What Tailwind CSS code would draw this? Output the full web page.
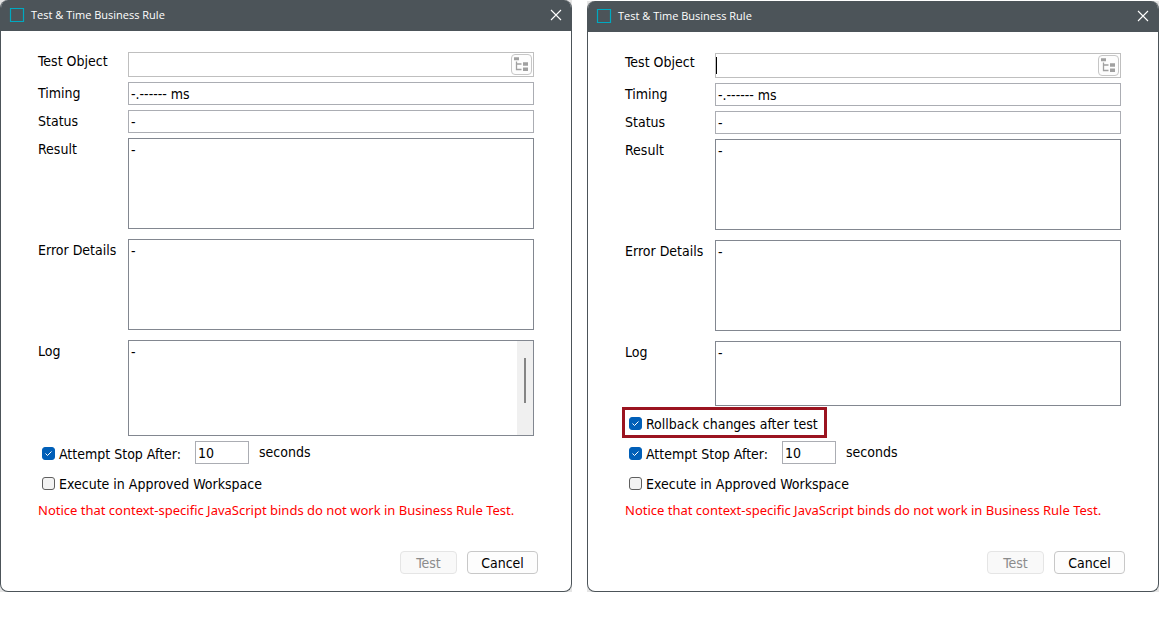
<!DOCTYPE html>
<html lang="en">
  <head>
    <meta charset="UTF-8" />
    <meta name="viewport" content="width=device-width, initial-scale=1.0" />
    <title>Test &amp; Time Business Rule</title>
    <script src="https://cdn.jsdelivr.net/npm/@tailwindcss/browser@4"></script>
    <style>
      body {
        font-family: 'DejaVu Sans Condensed', 'Noto Sans', sans-serif;
      }
    </style>
  </head>
  <body class="bg-white text-black text-sm leading-[18px]">
    <main class="grid grid-cols-2 gap-[15px]">
      <!-- Dialog without the rollback option -->
      <section class="bg-neutral-200">
        <div class="h-full flex flex-col bg-white border border-t-0 border-[#4c5459] rounded-lg overflow-hidden">
          <header class="h-[31px] bg-[#4c5459] text-white flex items-center pl-2 pr-[9px] pb-px">
            <svg class="w-4 h-4" viewBox="0 0 16 16" fill="none" stroke="#00a9c1" stroke-width="1.2"><path d="M1.500 1.500h13v13h-13z" /></svg>
            <h1 class="ml-[6px] text-[11px] font-['Open_Sans']">Test &amp; Time Business Rule</h1>
            <button type="button" aria-label="Close" class="ml-auto">
              <svg class="w-3 h-3" viewBox="0 0 12 12" fill="none" stroke="#fff" stroke-width="1.1"><path d="M1 1l10 10M11 1L1 11" /></svg>
            </button>
          </header>
          <form class="flex-1 flex flex-col px-[37px] pt-[21px] pb-[17px]">
            <div class="grid grid-cols-[90px_1fr] gap-y-[5px]">
              <label for="object1">Test Object</label>
              <div class="h-[25px] flex items-center border border-[#bfbfbf] pl-[2px] pr-px">
                <input id="object1" type="text" class="flex-1 min-w-0 outline-none" />
                <button type="button" aria-label="Browse" class="w-[21px] h-[21px] border border-[#c6c6c6] rounded bg-[#fdfdfd] flex items-center justify-center">
                  <svg class="w-[15px] h-[15px]" viewBox="0 0 15 15"><path fill="#a0a0a0" d="M0 0.300h5v3H0zM9 5.300h5v3.400H9zM9 10.600h5v3.400H9z" /><path d="M2.500 4.500v8H7.500M2.500 7H7.500" fill="none" stroke="#a0a0a0" stroke-width="1.3" /></svg>
                </button>
              </div>
              <label for="timing1" class="pt-[2px]">Timing</label>
              <input id="timing1" type="text" readonly value="-.------ ms" class="h-[23px] border border-[#abadb3] px-[2px] outline-none" />
              <label for="status1" class="pt-[2px]">Status</label>
              <input id="status1" type="text" readonly value="-" class="h-[23px] border border-[#abadb3] px-[2px] outline-none" />
              <label for="result1" class="pt-[2px]">Result</label>
              <textarea id="result1" readonly class="h-[91px] mb-[5px] border border-[#828790] px-[2px] pt-[2px] resize-none outline-none">-</textarea>
              <label for="error1" class="pt-[2px]">Error Details</label>
              <textarea id="error1" readonly class="h-[91px] mb-[5px] border border-[#828790] px-[2px] pt-[2px] resize-none outline-none">-</textarea>
              <label for="log1" class="pt-[2px]">Log</label>
              <div class="h-[96px] flex border border-[#828790]">
                <textarea id="log1" readonly class="flex-1 min-w-0 px-[2px] pt-[2px] resize-none outline-none">-</textarea>
                <div class="w-4 bg-[#f0f0f0] flex justify-center pt-[17px]">
                  <div class="w-[2px] h-[45px] bg-[#858585]"></div>
                </div>
              </div>
            </div>
            <div class="mt-[5px] h-[23px] flex items-center pl-1">
              <div class="w-[153px] flex items-center pt-[2px]">
                <input id="stop1" type="checkbox" checked class="appearance-none w-[13px] h-[13px] rounded-[3px] border border-[#5f5f5f] bg-[#f3f3f3] checked:bg-[#005fb8] checked:border-[#005fb8]" />
                <svg class="w-[13px] h-[13px] -ml-[13px] pointer-events-none" viewBox="0 0 13 13" fill="none" stroke="#fff"><path d="M3.500 6.500l2 2 4-4" /></svg>
                <label for="stop1" class="pl-1">Attempt Stop After:</label>
              </div>
              <input id="seconds1" type="text" value="10" class="w-[54px] h-[23px] border border-[#abadb3] px-[2px] outline-none" />
              <label for="seconds1" class="ml-[10px] pb-[2px]">seconds</label>
            </div>
            <div class="mt-2 h-[23px] flex items-center pl-1">
              <input id="approved1" type="checkbox" class="appearance-none w-[13px] h-[13px] rounded-[3px] border border-[#5f5f5f] bg-[#f3f3f3]" />
              <label for="approved1" class="pl-1">Execute in Approved Workspace</label>
            </div>
            <p class="mt-[6px] text-[#ff0000] text-[13px] leading-[18px] font-['Noto_Sans']">Notice that context-specific JavaScript binds do not work in Business Rule Test.</p>
            <div class="mt-8 -mr-1 flex justify-end gap-[10px]">
              <button type="button" disabled class="w-[57px] h-[23px] border border-[#e5e5e5] rounded bg-[#f9f9f9] text-[#8b8b8b]">Test</button>
              <button type="button" class="w-[71px] h-[23px] border border-[#c8c8c8] rounded bg-[#fdfdfd]">Cancel</button>
            </div>
          </form>
        </div>
      </section>

      <!-- Dialog with the rollback option highlighted -->
      <section class="mt-px bg-neutral-200">
        <div class="h-full flex flex-col bg-white border border-t-0 border-[#4c5459] rounded-lg overflow-hidden">
          <header class="h-[31px] bg-[#4c5459] text-white flex items-center pl-2 pr-[9px] pb-px">
            <svg class="w-4 h-4" viewBox="0 0 16 16" fill="none" stroke="#00a9c1" stroke-width="1.2"><path d="M1.500 1.500h13v13h-13z" /></svg>
            <h1 class="ml-[6px] text-[11px] font-['Open_Sans']">Test &amp; Time Business Rule</h1>
            <button type="button" aria-label="Close" class="ml-auto">
              <svg class="w-3 h-3" viewBox="0 0 12 12" fill="none" stroke="#fff" stroke-width="1.1"><path d="M1 1l10 10M11 1L1 11" /></svg>
            </button>
          </header>
          <form class="flex-1 flex flex-col px-[37px] pt-[21px] pb-[17px]">
            <div class="grid grid-cols-[90px_1fr] gap-y-[5px]">
              <label for="object2">Test Object</label>
              <div class="h-[25px] flex items-center border border-[#bfbfbf] pr-px">
                <span class="w-px h-[17px] bg-black"></span>
                <input id="object2" type="text" class="flex-1 min-w-0 outline-none" />
                <button type="button" aria-label="Browse" class="w-[21px] h-[21px] border border-[#c6c6c6] rounded bg-[#fdfdfd] flex items-center justify-center">
                  <svg class="w-[15px] h-[15px]" viewBox="0 0 15 15"><path fill="#a0a0a0" d="M0 0.300h5v3H0zM9 5.300h5v3.400H9zM9 10.600h5v3.400H9z" /><path d="M2.500 4.500v8H7.500M2.500 7H7.500" fill="none" stroke="#a0a0a0" stroke-width="1.3" /></svg>
                </button>
              </div>
              <label for="timing2" class="pt-[2px]">Timing</label>
              <input id="timing2" type="text" readonly value="-.------ ms" class="h-[23px] border border-[#abadb3] px-[2px] outline-none" />
              <label for="status2" class="pt-[2px]">Status</label>
              <input id="status2" type="text" readonly value="-" class="h-[23px] border border-[#abadb3] px-[2px] outline-none" />
              <label for="result2" class="pt-[2px]">Result</label>
              <textarea id="result2" readonly class="h-[91px] mb-[5px] border border-[#828790] px-[2px] pt-[2px] resize-none outline-none">-</textarea>
              <label for="error2" class="pt-[2px]">Error Details</label>
              <textarea id="error2" readonly class="h-[91px] mb-[5px] border border-[#828790] px-[2px] pt-[2px] resize-none outline-none">-</textarea>
              <label for="log2" class="pt-[2px]">Log</label>
              <textarea id="log2" readonly class="h-[65px] border border-[#828790] px-[2px] pt-[2px] resize-none outline-none">-</textarea>
            </div>
            <div class="mt-px -ml-[3px] w-[205px] h-[31px] flex items-center border-3 border-[#9b1420] pl-1 pt-[2px]">
              <input id="rollback" type="checkbox" checked class="appearance-none w-[13px] h-[13px] rounded-[3px] border border-[#5f5f5f] bg-[#f3f3f3] checked:bg-[#005fb8] checked:border-[#005fb8]" />
              <svg class="w-[13px] h-[13px] -ml-[13px] pointer-events-none" viewBox="0 0 13 13" fill="none" stroke="#fff"><path d="M3.500 6.500l2 2 4-4" /></svg>
              <label for="rollback" class="pl-1">Rollback changes after test</label>
            </div>
            <div class="mt-[3px] h-[23px] flex items-center pl-1">
              <div class="w-[153px] flex items-center pt-[2px]">
                <input id="stop2" type="checkbox" checked class="appearance-none w-[13px] h-[13px] rounded-[3px] border border-[#5f5f5f] bg-[#f3f3f3] checked:bg-[#005fb8] checked:border-[#005fb8]" />
                <svg class="w-[13px] h-[13px] -ml-[13px] pointer-events-none" viewBox="0 0 13 13" fill="none" stroke="#fff"><path d="M3.500 6.500l2 2 4-4" /></svg>
                <label for="stop2" class="pl-1">Attempt Stop After:</label>
              </div>
              <input id="seconds2" type="text" value="10" class="w-[54px] h-[23px] border border-[#abadb3] px-[2px] outline-none" />
              <label for="seconds2" class="ml-[10px] pb-[2px]">seconds</label>
            </div>
            <div class="mt-2 h-[23px] flex items-center pl-1">
              <input id="approved2" type="checkbox" class="appearance-none w-[13px] h-[13px] rounded-[3px] border border-[#5f5f5f] bg-[#f3f3f3]" />
              <label for="approved2" class="pl-1">Execute in Approved Workspace</label>
            </div>
            <p class="mt-[6px] text-[#ff0000] text-[13px] leading-[18px] font-['Noto_Sans']">Notice that context-specific JavaScript binds do not work in Business Rule Test.</p>
            <div class="mt-8 -mr-1 flex justify-end gap-[10px]">
              <button type="button" disabled class="w-[57px] h-[23px] border border-[#e5e5e5] rounded bg-[#f9f9f9] text-[#8b8b8b]">Test</button>
              <button type="button" class="w-[71px] h-[23px] border border-[#c8c8c8] rounded bg-[#fdfdfd]">Cancel</button>
            </div>
          </form>
        </div>
      </section>
    </main>
  </body>
</html>
